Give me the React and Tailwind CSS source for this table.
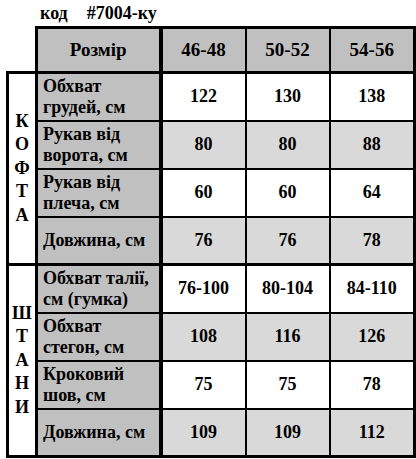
import React from 'react';

// size chart: two sections (кофта / штани), three size columns
const sizes = ['46-48', '50-52', '54-56'];

const sections = [
  {
    title: ['К', 'О', 'Ф', 'Т', 'А'],
    rows: [
      { label: ['Обхват', 'грудей, см'], values: ['122', '130', '138'] },
      { label: ['Рукав від', 'ворота, см'], values: ['80', '80', '88'] },
      { label: ['Рукав від', 'плеча, см'], values: ['60', '60', '64'] },
      { label: ['Довжина, см'], values: ['76', '76', '78'] },
    ],
  },
  {
    title: ['Ш', 'Т', 'А', 'Н', 'И'],
    rows: [
      { label: ['Обхват талії,', 'см (гумка)'], values: ['76-100', '80-104', '84-110'] },
      { label: ['Обхват', 'стегон, см'], values: ['108', '116', '126'] },
      { label: ['Кроковий', 'шов, см'], values: ['75', '75', '78'] },
      { label: ['Довжина, см'], values: ['109', '109', '112'] },
    ],
  },
];

export default function App() {
  return (
    <div className="w-[416px] h-[459px] bg-white text-black font-['Liberation_Serif',serif] font-bold overflow-hidden">
      <div className="h-[26px] pl-[40px] pt-[3px] text-[18px] leading-[21px]">
        <span>код</span>
        <span className="ml-[19px]">#7004-ку</span>
      </div>

      <table className="ml-[6px] border-collapse table-fixed w-[407px]">
        <colgroup>
          <col className="w-[29px]" />
          <col className="w-[124px]" />
          <col className="w-[85px]" />
          <col className="w-[84px]" />
          <col className="w-[85px]" />
        </colgroup>
        <thead>
          <tr className="h-[45px]">
            <td className="p-0 border-0" />
            <td className="p-0 bg-[#c0c0c0] border-[3px] border-r-4 border-black text-center text-[19px]">Розмір</td>
            {sizes.map((s, i) => (
              <td key={s} className={`p-0 bg-[#c0c0c0] border-2 border-t-[3px] border-b-[3px] border-black text-center text-[19px] ${i === 2 ? 'border-r-[3px]' : ''}`}>
                {s}
              </td>
            ))}
          </tr>
        </thead>
        <tbody>
          {sections.map((sec, si) =>
            sec.rows.map((row, ri) => {
              const gray = ri % 2 === 1;
              const first = ri === 0;
              const last = ri === sec.rows.length - 1;
              return (
                <tr key={si + '-' + ri} className="h-[48px]">
                  {first && (
                    <td rowSpan={sec.rows.length} className="p-0 border-[3px] border-black align-middle">
                      <div className="flex flex-col items-center text-[18px] leading-[23.5px]">
                        {sec.title.map((ch, k) => <span key={k}>{ch}</span>)}
                      </div>
                    </td>
                  )}
                  <td className={`p-0 pl-[5px] bg-[#c0c0c0] border-2 border-l-[3px] border-r-4 border-black text-[18px] leading-[21px] ${first ? 'border-t-[3px]' : ''} ${last ? 'border-b-[3px]' : ''}`}>
                    {row.label.map((l, k) => <div key={k}>{l}</div>)}
                  </td>
                  {row.values.map((v, vi) => (
                    <td
                      key={vi}
                      className={`p-0 text-center text-[18px] border-2 border-black ${gray ? 'bg-[#d9d9d9]' : 'bg-white'} ${first ? 'border-t-[3px]' : ''} ${last ? 'border-b-[3px]' : ''} ${vi === 2 ? 'border-r-[3px]' : ''}`}
                    >
                      {v}
                    </td>
                  ))}
                </tr>
              );
            })
          )}
        </tbody>
      </table>
    </div>
  );
}
